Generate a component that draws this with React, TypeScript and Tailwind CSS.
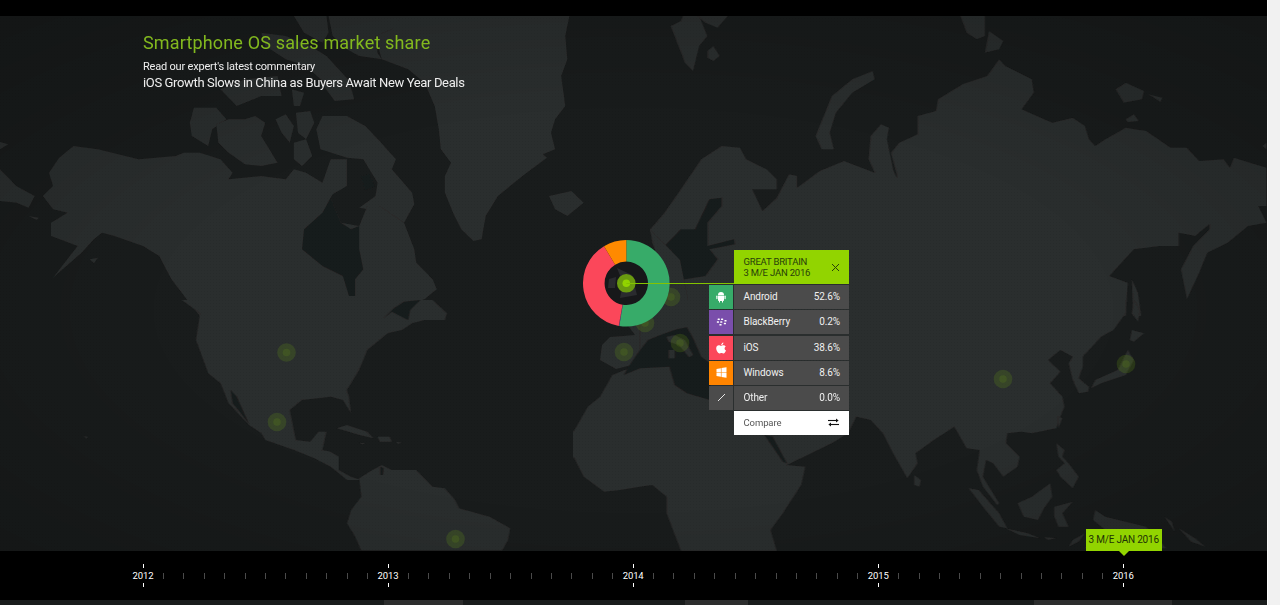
import React from "react";

const land = "fill-[#2c2d2d]";
const sea = "fill-[#191c1c]";
const Q = { tl: "translate(0,16) scale(0.40816,0.33333)", tr: "translate(640,16) scale(0.40816,0.33333)", bl: "translate(0,300) scale(0.40816,0.33333)", br: "translate(640,300) scale(0.40816,0.33333)" };

const tlLand = [
  "925,0 1395,0 1385,60 1390,130 1375,180 1385,270 1360,310 1350,350 1360,400 1330,415 1340,425 1280,480 1220,540 1190,600 1180,670 1160,675 1130,640 1110,590 1090,530 1090,480 1105,440 1080,400 1075,340 1065,270 1040,200 1000,160 935,130 920,60",
  "805,0 985,0 960,40 920,60 925,110 935,130 880,120 850,100 815,60",
  "720,0 800,0 805,50 790,80 745,50",
  "640,50 700,60 760,90 800,120 830,160 860,200 860,240 825,240 790,195 750,150 700,130 650,90",
  "540,220 600,190 680,180 690,240 640,240 580,270",
  "715,220 745,230 735,270 720,270",
  "790,205 860,215 868,250 820,255",
  "475,275 530,275 555,310 520,340 510,390 470,360 465,320",
  "530,325 560,310 600,310 625,300 650,320 640,360 660,400 680,440 640,450 600,445 560,410 535,380",
  "675,310 700,295 720,330 710,380 690,350",
  "725,290 760,285 770,320 750,370 730,350",
  "775,340 790,300 850,300 895,330 930,375 970,430 960,460 1010,530 1015,565 990,620 950,590 880,575 920,540 925,500 890,430 850,425 785,400",
  "720,380 750,370 765,420 740,450 720,430",
  "120,470 145,425 180,390 240,400 340,430 430,420 450,410 490,410 540,430 570,470 560,490 640,480 700,490 720,460 750,470 790,500 810,430 850,430 850,510 815,535 810,545 835,620 880,630 900,570 930,570 990,620 1015,700 1020,740 1060,790 1070,820 1040,850 960,880 950,900 490,900 470,870 420,790 390,720 350,690 280,660 250,650 230,670 200,710 130,785 190,690 125,660 125,620 165,590 130,580 105,540 130,510",
  "220,730 240,725 230,742",
  "1345,540 1400,525 1430,560 1390,600 1360,580",
  "0,460 40,510 85,540 70,575 40,560 0,555",
  "0,378 20,385 0,400",
  "70,600 95,605 90,612",
];
const hudson = "745,640 790,590 810,545 835,620 860,640 880,630 880,700 890,760 870,790 870,840 855,840 840,780 790,750 740,700";
const tlSea = [hudson, "885,480 905,475 918,510 895,525"];

const trLand = [
  "75,30 100,15 105,0 145,0 165,60 145,90 130,165 110,140",
  "140,0 215,0 190,35 160,20",
  "165,105 180,90 195,120 180,135 165,125",
  "430,360 450,300 470,240 520,190 570,165 575,190 520,230 480,290 465,350 475,400 445,400",
  "785,0 845,0 845,60 825,70 800,50",
  "855,45 890,75 880,100 845,110",
  "1165,220 1190,200 1235,225 1230,250 1185,260",
  "1245,235 1280,245 1275,258",
  "1190,310 1210,295 1222,315 1195,318",
  "1525,390 1535,380 1535,400",
  "25,640 60,590 100,520 150,430 200,390 245,395 260,430 310,460 335,490 335,520 300,520 275,520 300,585 335,545 365,475 385,480 385,515 440,465 500,435 575,470 560,430 565,360 590,325 610,335 605,370 620,460 630,490 605,530 630,480 615,410 635,380 680,355 680,300 725,285 730,250 790,205 850,180 880,130 895,150 960,190 965,230 935,280 1010,320 1060,305 1090,330 1100,370 1115,390 1140,370 1190,335 1240,345 1300,395 1340,395 1370,435 1430,430 1445,455 1455,425 1535,455 1535,570 1515,570 1535,620 1490,630 1440,680 1390,710 1370,770 1340,850 1325,760 1355,690 1395,640 1395,625 1360,660 1320,650 1320,690 1275,690 1210,700 1150,780 1195,800 1190,900 70,900 60,770 30,680",
  "1205,790 1220,830 1228,900 1208,900",
];
const trSea = [
  "135,640 170,550 200,545 200,570 165,620 165,690 230,670 232,685 170,700 190,730 160,780 110,790 75,790 85,760 75,700 60,720 50,775 80,800 40,800 60,690 100,640",
];

const blLand = [
  "445,0 490,40 480,120 510,220 540,250 560,310 610,375 640,400 650,420 720,450 770,475 810,500 850,540 885,540 860,530 830,510 830,470 810,455 790,450 800,395 780,395 760,425 725,420 710,330 740,300 780,295 810,290 840,300 860,340 855,290 850,270 880,210 900,150 950,100 985,90 1010,70 1040,60 1090,60 1095,40 1060,0",
  "825,385 850,375 900,395 915,415 880,405",
  "925,410 955,410 960,425 930,425",
  "880,428 895,430 888,433",
  "970,425 985,428 975,431",
  "205,408 215,410 212,416",
  "880,535 905,515 935,495 960,510 1020,510 1060,560 1090,565 1115,600 1125,625 1200,650 1250,685 1245,720 1230,752 885,752 870,710 850,670 860,630 885,590",
];
const blSea = [
  "565,270 580,290 610,372 590,340 570,310",
  "940,55 965,25 990,5 1030,0 1005,30 1000,60 960,35",
  "932,500 940,505 938,525 932,525",
];

const brLand = [
  "0,0 1190,0 1190,40 1160,90 1130,110 1085,170 1085,200 1075,235 1100,260 1098,275 1075,280 1060,240 1050,190 1060,170 1030,150 1000,180 1030,215 1005,250 1035,290 1040,320 1030,350 1020,385 960,400 935,395 900,400 897,430 930,470 925,500 890,530 865,490 848,480 840,530 880,610 875,615 840,560 825,510 832,450 800,445 770,380 720,420 675,460 680,490 655,535 620,460 595,400 565,360 530,350 510,400 470,430 360,495 405,500 395,555 350,640 320,690 335,752 100,752 65,640 65,590 30,555 0,560 -48,570 -88,575 -138,530 -163,470 -163,395 -128,320 -98,290 -68,225 -38,210 0,200",
  "1210,0 1225,30 1220,65 1205,40",
  "1205,90 1235,100 1210,125 1200,120",
  "1105,265 1115,240 1170,210 1195,150 1210,180 1190,225 1130,250",
  "672,525 688,540 685,560 672,555",
  "805,565 830,570 880,640 900,685 880,680 840,620",
  "895,685 950,700 980,715 930,705",
  "990,712 1020,714 1000,720",
  "925,610 960,590 1005,550 1010,590 990,625 975,660 940,650",
  "1015,620 1060,605 1035,640 1050,680 1025,680 1015,650",
  "1020,430 1040,450 1035,470 1050,490 1075,530 1060,565 1030,530 1020,510 1040,490 1025,470",
  "1025,350 1035,355 1025,385",
  "1115,630 1140,650 1240,680 1290,745 1090,745 1140,690 1110,660",
  "1050,740 1060,720 1090,700 1075,725",
  "1285,650 1303,665 1310,695",
  "1320,685 1360,715 1385,740 1350,725",
];
const brSea = [
  "-40,225 0,205 72,200 85,255 115,280 172,300 172,190 150,170 130,115 115,82 90,88 50,105 20,120 0,150 -20,185",
  "305,405 325,410 360,490 350,485",
];
const brOver = ["65,110 85,105 110,120 130,165 120,172 95,135 70,125", "70,150 85,150 85,175 70,175"];

const Poly = ({ pts, cls }: { pts: string[]; cls: string }) => (
  <>{pts.map((p, i) => <polygon key={i} points={p} className={cls} />)}</>
);

const markers: [number, number][] = [[286.5, 352.5], [277, 422], [455.5, 539], [624, 352], [680, 343], [671, 297], [645, 323], [1003, 379], [1126, 364]];

const cx = 626.3, cy = 283.3, R = 43.3, r = 21.7;
function arc(p0: number, p1: number) {
  const a0 = (p0 / 100) * 2 * Math.PI, a1 = (p1 / 100) * 2 * Math.PI;
  const pt = (rad: number, a: number) => `${(cx + rad * Math.sin(a)).toFixed(2)} ${(cy - rad * Math.cos(a)).toFixed(2)}`;
  const big = p1 - p0 > 50 ? 1 : 0;
  return `M${pt(R, a0)}A${R} ${R} 0 ${big} 1 ${pt(R, a1)}L${pt(r, a1)}A${r} ${r} 0 ${big} 0 ${pt(r, a0)}Z`;
}

function WorldMap() {
  return (
    <svg className="absolute inset-0 w-full h-full" viewBox="0 16 1267 535" preserveAspectRatio="none">
      <defs>
        <pattern id="dots" width="3" height="3" patternUnits="userSpaceOnUse">
          <rect width="1" height="1" fill="#000" opacity="0.05" />
        </pattern>
        <radialGradient id="vig" cx="50%" cy="55%" r="75%">
          <stop offset="0.5" stopColor="#000" stopOpacity="0" />
          <stop offset="1" stopColor="#000" stopOpacity="0.2" />
        </radialGradient>
        <filter id="soft" x="0" y="0" width="100%" height="100%">
          <feGaussianBlur stdDeviation="0.7" />
        </filter>
      </defs>
      <rect x="0" y="16" width="1267" height="535" className={sea} />
      <g filter="url(#soft)">
        <g transform={Q.tl}><Poly pts={tlLand} cls={land} /><Poly pts={tlSea} cls={sea} /></g>
        <g transform={Q.tr}><Poly pts={trLand} cls={land} /><Poly pts={trSea} cls={sea} /></g>
        <polygon points="650,229 660,270 672,285 660,295 630,300 620,315 635,335 610,337 602,345 600,360 616,369 632,365 645,352 655,340 677,343 690,310 680,260" className={land} />
        <g transform={Q.bl}><Poly pts={blLand} cls={land} /><Poly pts={blSea} cls={sea} /></g>
        <g transform={Q.br}><Poly pts={brLand} cls={land} /><Poly pts={brSea} cls={sea} /><Poly pts={brOver} cls={land} /></g>
      </g>
      <rect x="0" y="16" width="1267" height="535" fill="url(#dots)" />
      <rect x="0" y="16" width="1267" height="535" fill="url(#vig)" />
      {markers.map(([x, y], i) => (
        <g key={i}>
          <circle cx={x} cy={y} r="9.3" fill="#76b010" opacity="0.18" />
          <circle cx={x} cy={y} r="3.8" fill="#76b010" opacity="0.14" />
        </g>
      ))}
      <circle cx={cx} cy={cy} r={r} fill="#17181a" />
      <polygon points="617,268 632,275 637,295 620,298 623,283" fill="#2a2b2e" />
      <polygon points="609,279 616,277 615,288 608,288" fill="#2a2b2e" />
      <path d={arc(0, 52.6)} className="fill-[#37ab69]" />
      <path d={arc(52.6, 52.8)} className="fill-[#7a4eab]" />
      <path d={arc(52.8, 91.4)} className="fill-[#fb475a]" />
      <path d={arc(91.4, 100)} className="fill-[#ff8a00]" />
      <circle cx={cx} cy={cy} r="9.3" fill="#6a9a10" />
      <circle cx={cx} cy={cy} r="3.8" fill="#92d400" />
      <rect x={cx} y="283" width="109" height="1" fill="#84c400" />
    </svg>
  );
}

const rows = [
  { name: "Android", v: "52.6%", bg: "bg-[#37ab69]", icon: (
    <svg width="10" height="12" viewBox="0 0 10 12" fill="#fff"><path d="M2 4a3 3 0 0 1 6 0zM2 4.600h6v4.600a.8.8 0 0 1-.8.8H7v1.600H6V10H4v1.600H3V10h-.2a.8.8 0 0 1-.8-.8z" /><rect x="0.3" y="4.600" width="1.200" height="3.600" rx="0.6" /><rect x="8.500" y="4.600" width="1.200" height="3.600" rx="0.6" /></svg>
  ) },
  { name: "BlackBerry", v: "0.2%", bg: "bg-[#7a4eab]", icon: (
    <svg width="11" height="9" viewBox="0 0 11 9" fill="#fff"><rect x="1.600" y="0.5" width="2.200" height="1.500" rx=".5" /><rect x="5" y="0.5" width="2.200" height="1.500" rx=".5" /><rect x="0.8" y="3.200" width="2.200" height="1.500" rx=".5" /><rect x="4.200" y="3.200" width="2.200" height="1.500" rx=".5" /><rect x="8.400" y="2" width="2.200" height="1.500" rx=".5" /><rect x="3.400" y="6" width="2.200" height="1.500" rx=".5" /><rect x="7.800" y="4.800" width="2.200" height="1.500" rx=".5" /></svg>
  ) },
  { name: "iOS", v: "38.6%", bg: "bg-[#fb475a]", icon: (
    <svg width="10" height="12" viewBox="0 0 10 12" fill="#fff"><path d="M5.200 3.100C5.200 1.700 6.200.6 7.400.4c.1 1.400-1 2.600-2.200 2.700zM7.500 3.200c.9 0 1.700.4 2.200 1.200-1.700 1-1.400 3.400.3 4.100-.5 1.300-1.500 3-2.500 3-.8 0-1-.5-2-.5s-1.300.5-2 .5C2.300 11.500.2 8.800.2 6.300c0-2 1.300-3.100 2.600-3.100.9 0 1.600.6 2.100.6.500 0 1.400-.6 2.600-.6z" /></svg>
  ) },
  { name: "Windows", v: "8.6%", bg: "bg-[#ff8400]", icon: (
    <svg width="11" height="11" viewBox="0 0 11 11" fill="#fff"><path d="M0.5 1.900 4.900 1.200V5.200H.5zM5.500 1.100 10.500.3V5.200H5.500zM.5 5.800H4.900V9.800L.5 9.100zM5.500 5.800H10.500V10.700L5.500 9.900z" /></svg>
  ) },
  { name: "Other", v: "0.0%", bg: "bg-[#4b4b4b]", icon: (
    <svg width="9" height="9" viewBox="0 0 9 9" stroke="#e5e5e5" strokeWidth="1"><line x1="1" y1="8" x2="8" y2="1" /></svg>
  ) },
];

function Panel() {
  return (
    <div className="absolute left-[709px] top-[234px] w-[140px] flex flex-col gap-[1.200px]" style={{ fontFamily: "Roboto, sans-serif" }}>
      <div className="ml-[25px] h-[34px] bg-[#92d400] flex items-center justify-between pl-[9.500px] pr-[9px] text-[#27400a] text-[9.500px] leading-[11px] tracking-[-0.2px]">
        <div>
          <div>GREAT BRITAIN</div>
          <div>3 M/E JAN 2016</div>
        </div>
        <svg width="9" height="9" viewBox="0 0 9 9" stroke="#27400a" strokeWidth="1"><path d="M1 1l7 7M8 1l-7 7" /></svg>
      </div>
      {rows.map((x) => (
        <div key={x.name} className="flex h-[24px] gap-[1px]">
          <div className={`w-[24px] flex items-center justify-center ${x.bg}`}>{x.icon}</div>
          <div className="flex-1 bg-[#4b4b4b] flex items-center justify-between pl-[9.500px] pr-[9px] pb-[1px] text-[#f0f0f0] text-[10px] tracking-[-0.1px]">
            <span>{x.name}</span>
            <span>{x.v}</span>
          </div>
        </div>
      ))}
      <div className="ml-[25px] h-[24px] bg-white flex items-center justify-between pl-[9.500px] pr-[10px] pb-[1px] text-[#555] text-[9.500px] tracking-[-0.1px]">
        <span>Compare</span>
        <svg width="11" height="9" viewBox="0 0 11 9" stroke="#111" strokeWidth="1.100" fill="#111"><path d="M0 2.500H9" /><path d="M8 .6 10.600 2.500 8 4.400z" stroke="none" /><path d="M11 6.500H2" /><path d="M3 4.600.4 6.500 3 8.400z" stroke="none" /></svg>
      </div>
    </div>
  );
}

const cells = Array.from({ length: 49 }, (_, i) => i);

function Timeline() {
  return (
    <div className="relative h-[49px] bg-black flex pl-[132.800px] text-white" style={{ fontFamily: "Roboto, sans-serif" }}>
      {cells.map((i) =>
        i % 12 === 0 ? (
          <div key={i} className="w-[20.430px] flex flex-col items-center justify-center">
            <div className="w-px h-[4px] bg-white" />
            <div className="text-[9.500px] leading-[15px] whitespace-nowrap tracking-[-0.1px]">{2012 + i / 12}</div>
            <div className="w-px h-[4px] bg-white" />
          </div>
        ) : (
          <div key={i} className="w-[20.430px] flex items-center justify-center">
            <div className="w-px h-[6px] bg-[#4a4a4a]" />
          </div>
        )
      )}
      <div className="absolute left-[1085.700px] bottom-full w-[76px] h-[22.500px] bg-[#92d400] flex items-center justify-center text-[#1f3306] text-[10px] whitespace-nowrap tracking-[-0.2px]">
        3 M/E JAN 2016
        <div className="absolute left-[33px] top-full w-0 h-0 border-l-[5px] border-r-[5px] border-t-[5px] border-l-transparent border-r-transparent border-t-[#92d400]" />
      </div>
    </div>
  );
}

export default function App() {
  return (
    <div className="w-[1280px] h-[605px] overflow-hidden bg-[#f1f1f1] flex">
      <div className="w-[1267px] flex flex-col">
        <div className="h-4 bg-black shrink-0" />
        <div className="relative h-[535px] shrink-0">
          <WorldMap />
          <div className="relative pl-[143px] pt-[16px]" style={{ fontFamily: "Roboto, sans-serif" }}>
            <h1 className="text-[18px] leading-[22px] text-[#82b81e] tracking-[0.16px]">Smartphone OS sales market share</h1>
            <p className="mt-[6px] text-[11px] leading-[14px] text-[#eeeeee] tracking-[-0.2px]">Read our expert's latest commentary</p>
            <p className="mt-[0px] text-[13px] leading-[17px] text-[#eeeeee] tracking-[-0.36px]">iOS Growth Slows in China as Buyers Await New Year Deals</p>
          </div>
          <Panel />
        </div>
        <Timeline />
        <div className="flex h-[5px] bg-[#191c1c] shrink-0">
          <div className="w-[384px]" />
          <div className="w-[79px] bg-[#2c2d2d]" />
          <div className="w-[222px]" />
          <div className="w-[63px] bg-[#2c2d2d]" />
          <div className="w-[286px]" />
          <div className="w-[138px] bg-[#2c2d2d]" />
        </div>
      </div>
      <div className="w-[1px] bg-white" />
    </div>
  );
}
